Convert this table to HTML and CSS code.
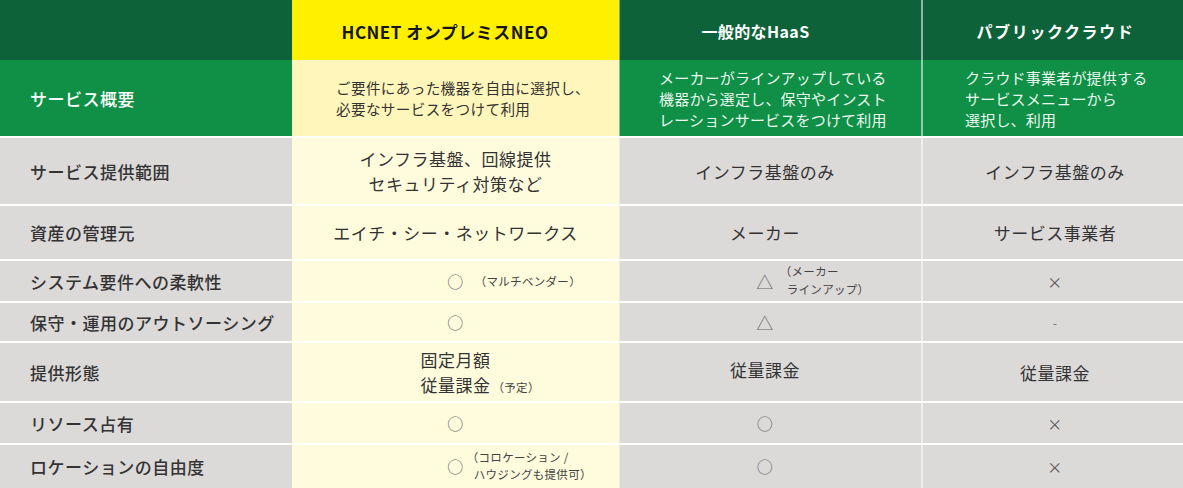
FILE: index.html
```html
<!DOCTYPE html>
<html lang="ja">
<head>
<meta charset="utf-8">
<title>比較表</title>
<link rel="stylesheet" href="styles.css">
</head>
<body>
<div class="table">
  <div class="c hd"></div>
  <div class="c hd-neo">HCNET オンプレミスNEO</div>
  <div class="c hd c3 h3">一般的なHaaS</div>
  <div class="c hd c4 h4">パブリッククラウド</div>

  <div class="c ov-label">サービス概要</div>
  <div class="c ov-neo"><p>ご要件にあった機器を自由に選択し、<br>必要なサービスをつけて利用</p></div>
  <div class="c ov c3 ov3"><p>メーカーがラインアップしている<br>機器から選定し、保守やインスト<br>レーションサービスをつけて利用</p></div>
  <div class="c ov c4 ov4"><p>クラウド事業者が提供する<br>サービスメニューから<br>選択し、利用</p></div>

  <div class="c lbl">サービス提供範囲</div>
  <div class="c neo"><p class="lines">インフラ基盤、回線提供<br>セキュリティ対策など</p></div>
  <div class="c cmp c3 d3">インフラ基盤のみ</div>
  <div class="c cmp c4 d4">インフラ基盤のみ</div>

  <div class="c lbl">資産の管理元</div>
  <div class="c neo">エイチ・シー・ネットワークス</div>
  <div class="c cmp c3 d3">メーカー</div>
  <div class="c cmp c4 d4">サービス事業者</div>

  <div class="c lbl">システム要件への柔軟性</div>
  <div class="c neo">
    <div class="pair"><span class="main sym circle">○</span><span class="note n1">（マルチベンダー）</span></div>
  </div>
  <div class="c cmp c3 d3">
    <div class="pair"><span class="main sym tri">△</span><span class="note n2">（メーカー<br><span class="ind">ラインアップ）</span></span></div>
  </div>
  <div class="c cmp c4 d4"><span class="sym cross">×</span></div>

  <div class="c lbl">保守・運用のアウトソーシング</div>
  <div class="c neo"><span class="sym circle">○</span></div>
  <div class="c cmp c3 d3"><span class="sym tri">△</span></div>
  <div class="c cmp c4 d4"><span class="dash">-</span></div>

  <div class="c lbl">提供形態</div>
  <div class="c neo">
    <div class="stack">
      <div class="pair"><span class="main">固定月額</span></div>
      <div class="pair base"><span class="main">従量課金</span><span class="note n3">（予定）</span></div>
    </div>
  </div>
  <div class="c cmp c3 d3"><span class="up">従量課金</span></div>
  <div class="c cmp c4 d4">従量課金</div>

  <div class="c lbl">リソース占有</div>
  <div class="c neo"><span class="sym circle">○</span></div>
  <div class="c cmp c3 d3"><span class="sym circle">○</span></div>
  <div class="c cmp c4 d4"><span class="sym cross">×</span></div>

  <div class="c lbl">ロケーションの自由度</div>
  <div class="c neo">
    <div class="pair"><span class="main sym circle">○</span><span class="note n4">（コロケーション /<br><span class="ind">ハウジングも提供可）</span></span></div>
  </div>
  <div class="c cmp c3 d3"><span class="sym circle">○</span></div>
  <div class="c cmp c4 d4"><span class="sym cross">×</span></div>
</div>
</body>
</html>
```

FILE: styles.css
```css
* { box-sizing: border-box; }
html, body { margin: 0; padding: 0; background: #ffffff; }
body {
  width: 1183px;
  height: 488px;
  overflow: hidden;
  font-family: "Noto Sans CJK JP", "Noto Sans", sans-serif;
  color: #333333;
}
p { margin: 0; }

.table {
  display: grid;
  grid-template-columns: 292px 327px 302px 262px;
  grid-template-rows: 60px 76px 68px 55px 42px 40px 60px 42px 45px;
  width: 1183px;
}

.c {
  display: flex;
  align-items: center;
  justify-content: center;
  font-size: 17px;
  letter-spacing: 0.5px;
  line-height: 25px;
}
.c3 { border-left: 1px solid rgba(255, 255, 255, 0.45); }
.c4 { border-left: 2px solid rgba(255, 255, 255, 0.55); }

/* header row */
.hd {
  background: #0e6239;
  color: #ffffff;
  font-weight: 700;
  font-size: 16px;
  letter-spacing: 0.4px;
  padding-top: 2px;
}
.hd-neo {
  background: #fff000;
  color: #161616;
  font-weight: 700;
  font-size: 17px;
  letter-spacing: 0.5px;
  padding-right: 21px;
  padding-top: 2px;
}
.h3 { padding-right: 30px; }
.h4 { padding-left: 5px; letter-spacing: 1.6px; }

/* overview row */
.ov-label {
  background: #0f9046;
  color: #ffffff;
  justify-content: flex-start;
  padding-left: 30px;
  font-weight: 500;
}
.ov-neo {
  background: #fff6bb;
  justify-content: flex-start;
  padding-left: 44px;
  font-size: 14.6px;
  letter-spacing: 0.35px;
  line-height: 21px;
  color: #333333;
}
.ov {
  background: #0f9046;
  color: #eaf6ee;
  justify-content: flex-start;
  font-size: 15px;
  letter-spacing: 0.2px;
  line-height: 21px;
}
.ov3 { padding-left: 39px; }
.ov4 { padding-left: 42px; }

/* body rows */
.lbl, .neo, .cmp { border-top: 2px solid #ffffff; }
.lbl {
  background: #dcd9d9;
  justify-content: flex-start;
  padding-left: 30px;
  font-weight: 500;
  color: #333333;
}
.neo { background: #fffbdd; }
.cmp { background: #dcd9d9; }
.d3 { padding-right: 11px; }
.d4 { padding-left: 4px; }

.lines { text-align: center; }

.pair {
  display: grid;
  grid-template-columns: 1fr auto 1fr;
  align-items: center;
  width: 100%;
}
.pair .main { grid-column: 2; }
.pair .note { grid-column: 3; justify-self: start; }
.pair.base { align-items: baseline; }
.stack { width: 100%; }

.note {
  font-size: 11.5px;
  letter-spacing: 0.3px;
  line-height: 18px;
  color: #444444;
}
.n1 { margin-left: 11px; }
.n2 { margin-left: 6px; margin-top: -2px; }
.n3 { margin-left: 2px; }
.n4 { margin-left: 3px; margin-top: -2px; line-height: 17px; }
.ind { padding-left: 7px; }

.sym { color: #6a6a6a; font-weight: 400; }
.circle { font-size: 16px; }
.tri { font-size: 17px; }
.cross { font-size: 15px; color: #555555; }
.dash { font-size: 12px; color: #666666; }
.up { margin-top: -6px; }
```
